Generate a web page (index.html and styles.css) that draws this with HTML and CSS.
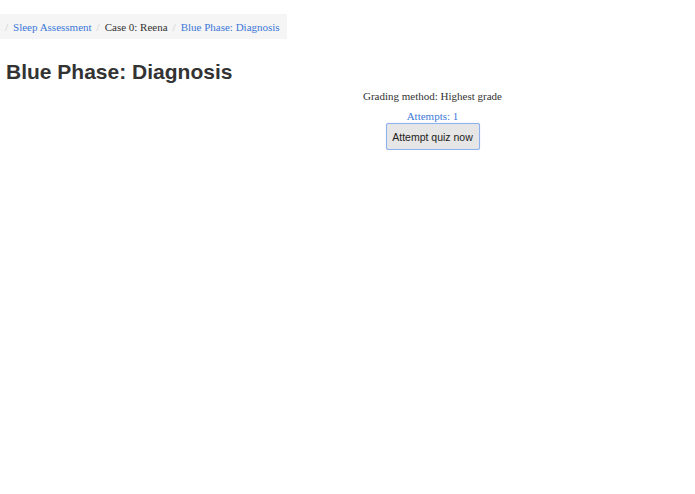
FILE: index.html
```html
<!DOCTYPE html>
<html>
<head>
<meta charset="utf-8">
<link rel="stylesheet" href="styles.css">
</head>
<body>
<div class="page">
  <nav class="crumbs">
    <span class="sep">/</span>
    <a class="link" href="#">Sleep Assessment</a>
    <span class="sep">/</span>
    <span class="plain">Case 0: Reena</span>
    <span class="sep">/</span>
    <a class="link" href="#">Blue Phase: Diagnosis</a>
  </nav>
  <h2 class="title">Blue Phase: Diagnosis</h2>
  <div class="layout">
    <div class="side"></div>
    <div class="main">
      <p class="method">Grading method: Highest grade</p>
      <a class="attempts" href="#">Attempts: 1</a>
      <button class="btn">Attempt quiz now</button>
    </div>
  </div>
</div>
</body>
</html>
```

FILE: styles.css
```css
html, body {
  margin: 0;
  padding: 0;
  background: #fff;
}
.page {
  padding-top: 14px;
}
.crumbs {
  display: inline-flex;
  align-items: center;
  gap: 5px;
  background: #f5f5f5;
  height: 25px;
  padding: 0 7px 0 5px;
  font-family: "Liberation Serif", "DejaVu Serif", serif;
  font-size: 11px;
  box-sizing: border-box;
}
.sep {
  color: #cccccc;
}
.link {
  color: #3c78d8;
  text-decoration: none;
}
.plain {
  color: #333;
}
.title {
  margin: 20px 0 0 6px;
  font-family: "Liberation Sans", Arial, sans-serif;
  font-size: 21px;
  font-weight: bold;
  color: #333;
  line-height: 26px;
}
.layout {
  display: flex;
}
.side {
  width: 170px;
  flex: none;
}
.main {
  flex: 1;
  display: flex;
  flex-direction: column;
  align-items: center;
  margin-top: 3px;
  font-family: "Liberation Serif", "DejaVu Serif", serif;
  font-size: 11px;
}
.method {
  margin: 0;
  color: #333;
  line-height: 16px;
}
.attempts {
  margin-top: 4px;
  color: #3c78d8;
  text-decoration: none;
  line-height: 16px;
}
.btn {
  margin-top: -1px;
  width: 94px;
  height: 27px;
  background: #e6e6e6;
  border: 1px solid #8fb2ee;
  box-shadow: 0 0 1px 0 #a9c4f5, inset 0 0 1px 0 #b8cff7;
  border-radius: 2px;
  font-family: "Liberation Sans", Arial, sans-serif;
  font-size: 10.5px;
  color: #222;
  padding: 0;
}
```
